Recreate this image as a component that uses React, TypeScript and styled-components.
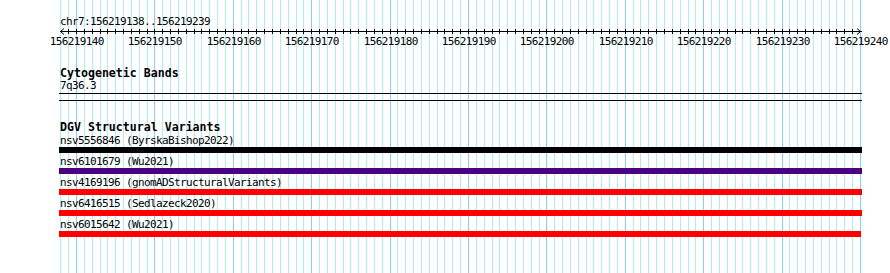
import React from "react";
import styled, { createGlobalStyle } from "styled-components";

const BP_START = 156219138;
const BP_END = 156219240;
const PX0 = 60.3;
const PX_PER_BP = 7.84;

const xFor = (bp: number) => Math.round(PX0 + (bp - BP_START) * PX_PER_BP);

const bps: number[] = [];
for (let bp = BP_START; bp <= BP_END; bp++) bps.push(bp);

const variants = [
  { id: "nsv5556846", source: "ByrskaBishop2022", color: "#000000", width: 803 },
  { id: "nsv6101679", source: "Wu2021", color: "#4b0082", width: 803 },
  { id: "nsv4169196", source: "gnomADStructuralVariants", color: "#ff0000", width: 803 },
  { id: "nsv6416515", source: "Sedlazeck2020", color: "#ff0000", width: 803 },
  { id: "nsv6015642", source: "Wu2021", color: "#ff0000", width: 802 },
];

const GlobalStyle = createGlobalStyle`
  html, body {
    margin: 0;
    padding: 0;
    background: #ffffff;
  }
`;

const Page = styled.div`
  position: relative;
  width: 890px;
  height: 273px;
  overflow: hidden;
  background: #ffffff;
  color: #000000;
  font-family: "DejaVu Sans Mono", "Liberation Mono", monospace;
`;

const GridLayer = styled.svg`
  position: absolute;
  left: 0;
  top: 0;
  z-index: 0;
`;

const Tracks = styled.div`
  position: relative;
  z-index: 1;
  display: flex;
  flex-direction: column;
`;

const Section = styled.div<{ $gap: number }>`
  display: flex;
  flex-direction: column;
  padding-left: 60px;
  margin-top: ${p => p.$gap}px;
`;

// small pixel-ish font: 6px per character
const Label = styled.div`
  font-size: 11px;
  letter-spacing: -0.62px;
  line-height: 13px;
  height: 13px;
  white-space: pre;
`;

// bold track titles: 7px per character
const TrackTitle = styled.div`
  font-size: 11.6px;
  font-weight: bold;
  line-height: 11px;
  height: 11px;
  white-space: pre;
`;

const RulerSvg = styled.svg`
  display: block;
  overflow: visible;
  margin-left: -60px;
`;

const BandBox = styled.div`
  margin: 1px 0 0 -1px;
  width: 803px;
  height: 6px;
  border-top: 1px solid #000;
  border-bottom: 1px solid #000;
`;

const FeatureList = styled.div`
  display: flex;
  flex-direction: column;
  padding-top: 1px;
`;

const FeatureRow = styled.div`
  display: flex;
  flex-direction: column;
  margin-bottom: 2px;
`;

const Bar = styled.div<{ $color: string; $width: number }>`
  margin-left: -1px;
  width: ${p => p.$width}px;
  height: 6px;
  background: ${p => p.$color};
`;

const Grid: React.FC = () => (
  <GridLayer width={890} height={273}>
    {bps.map(bp => (
      <rect
        key={bp}
        x={xFor(bp)}
        y={0}
        width={1}
        height={273}
        fill={(bp - BP_START) % 10 === 2 ? "#87cefa" : "#afeeee"}
      />
    ))}
  </GridLayer>
);

const Ruler: React.FC = () => (
  <RulerSvg width={890} height={20}>
    <rect x={60} y={3} width={802} height={1} fill="#000" />
    {bps.slice(1, -1).map(bp => (
      <rect key={bp} x={xFor(bp)} y={1} width={1} height={5} fill="#000" />
    ))}
    <polyline points="64,0.5 60.5,3.5 64,6.5" fill="none" stroke="#000" strokeWidth={1} />
    <polyline points="857,0.5 860.5,3.5 857,6.5" fill="none" stroke="#000" strokeWidth={1} />
    {bps
      .filter(bp => (bp - BP_START) % 10 === 2)
      .map(bp => (
        <text
          key={bp}
          x={xFor(bp) + 0.8}
          y={16.5}
          textAnchor="middle"
          fontFamily='"DejaVu Sans Mono", monospace'
          fontSize={11}
          letterSpacing={-0.62}
          fill="#000"
        >
          {bp}
        </text>
      ))}
  </RulerSvg>
);

const App: React.FC = () => (
  <>
    <GlobalStyle />
    <Page>
      <Grid />
      <Tracks>
        <Section $gap={15}>
          <Label>chr7:156219138..156219239</Label>
          <Ruler />
        </Section>

        <Section $gap={20}>
          <TrackTitle>Cytogenetic Bands</TrackTitle>
          <Label>7q36.3</Label>
          <BandBox />
        </Section>

        <Section $gap={21}>
          <TrackTitle>DGV Structural Variants</TrackTitle>
          <FeatureList>
            {variants.map(v => (
              <FeatureRow key={v.id}>
                <Label>
                  {v.id} ({v.source})
                </Label>
                <Bar $color={v.color} $width={v.width} />
              </FeatureRow>
            ))}
          </FeatureList>
        </Section>
      </Tracks>
    </Page>
  </>
);

export default App;
